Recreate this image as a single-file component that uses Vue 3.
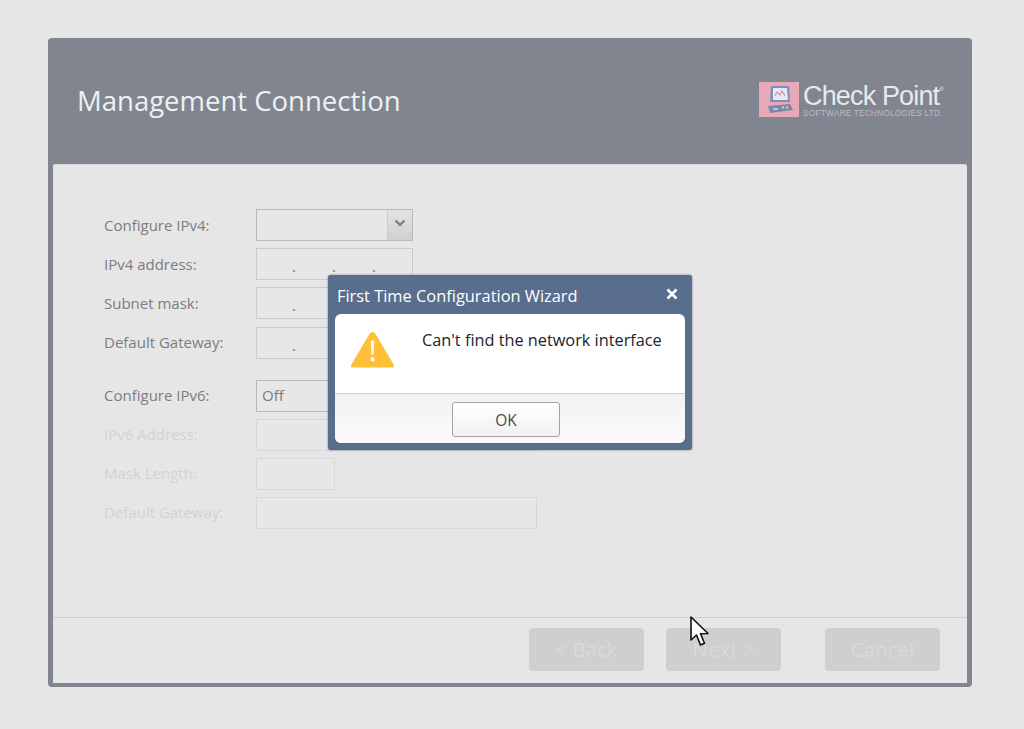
<script setup>
const ipv4Rows = [
  { label: 'IPv4 address:', dots: 3 },
  { label: 'Subnet mask:', dots: 1 },
  { label: 'Default Gateway:', dots: 1 },
]
const ipv6Rows = [
  { label: 'IPv6 Address:', cls: 'wide' },
  { label: 'Mask Length:', cls: 'short' },
  { label: 'Default Gateway:', cls: 'wide' },
]
</script>

<template>
  <div class="page">
    <div class="window">
      <header class="head">
        <h1>Management Connection</h1>
        <div class="logo">
          <svg class="mark" width="40" height="35" viewBox="0 0 40 35">
            <rect width="40" height="35" fill="#e7a9b8" />
            <path d="M12 4 H30 L31 20 H11 Z" fill="#7d8dbd" />
            <path d="M14 6 H28 L29 18 H14 Z" fill="#e6e9f3" />
            <path d="M16 14 L18 10 L21 13 L23 9 L26 14" fill="none" stroke="#d58aa8" stroke-width="1.1" />
            <path d="M9 24 L31 22 L34 28 L11 31 Z" fill="#7a86b0" />
            <path d="M23 26 l2 -1 M27 26 l2 -1" stroke="#e2cf60" stroke-width="2" />
            <path d="M14 27 h5" stroke="#cfd4e6" stroke-width="1.5" />
          </svg>
          <div class="brand">
            <div class="brand-name">Check Point<sup>®</sup></div>
            <div class="brand-sub">SOFTWARE TECHNOLOGIES LTD.</div>
          </div>
        </div>
      </header>

      <div class="panel">
        <div class="form">
          <div class="row">
            <label>Configure IPv4:</label>
            <div class="field select">
              <span class="select-value"></span>
              <span class="arrow">
                <svg width="12" height="8" viewBox="0 0 12 8">
                  <path d="M1.5 1.5 L6 6 L10.5 1.5" fill="none" stroke="#6b7d9b" stroke-width="2.2" />
                </svg>
              </span>
            </div>
          </div>
          <div v-for="r in ipv4Rows" :key="r.label" class="row">
            <label>{{ r.label }}</label>
            <div class="field ip">
              <span v-for="n in r.dots" :key="n" class="dot">.</span>
            </div>
          </div>

          <div class="row gap-top">
            <label>Configure IPv6:</label>
            <div class="field select"><span class="select-value">Off</span></div>
          </div>
          <div v-for="r in ipv6Rows" :key="r.label + r.cls" class="row off">
            <label>{{ r.label }}</label>
            <div class="field" :class="r.cls"></div>
          </div>
        </div>

        <footer class="foot">
          <button class="wbtn" disabled>&lt; Back</button>
          <button class="wbtn" disabled>Next &gt;</button>
          <button class="wbtn cancel" disabled>Cancel</button>
        </footer>
      </div>
    </div>

    <div class="dialog">
      <div class="dlg-title">
        <span>First Time Configuration Wizard</span>
        <svg width="12" height="12" viewBox="0 0 12 12">
          <path d="M1.5 1.5 L10.5 10.5 M10.5 1.5 L1.5 10.5" stroke="#fff" stroke-width="2.6" />
        </svg>
      </div>
      <div class="dlg-box">
        <div class="dlg-msg">
          <svg width="45" height="39" viewBox="0 0 46 40">
            <path d="M23 2 C21.5 2 20.5 3 19.5 4.5 L1.5 35 C0.3 37 0.8 38.5 3 38.5 H43 C45.2 38.5 45.7 37 44.5 35 L26.5 4.5 C25.5 3 24.5 2 23 2 Z" fill="#fdc038" />
            <path d="M21.2 11 H24.8 L24 25 H22 Z" fill="#fff" />
            <rect x="21.2" y="28" width="3.6" height="4" fill="#fff" />
          </svg>
          <p>Can't find the network interface</p>
        </div>
        <div class="dlg-foot">
          <button class="ok">OK</button>
        </div>
      </div>
    </div>

    <svg class="cursor" width="20" height="32" viewBox="0 0 20 32">
      <path d="M1 1 V24 L6.5 19 L10.5 29 L14.5 27.3 L10.5 17.8 L18 17.5 Z" fill="#fff" stroke="#111" stroke-width="1.6" stroke-linejoin="round" />
    </svg>
  </div>
</template>

<style>
html, body { margin: 0; background: #e6e6e6; }
</style>

<style scoped>
.page {
  position: relative;
  width: 1024px;
  height: 729px;
  overflow: hidden;
  box-sizing: border-box;
  padding: 38px 52px 42px 48px;
  background: #e6e6e6;
  font-family: "Open Sans", "Noto Sans", sans-serif;
}
.window {
  height: 649px;
  box-sizing: border-box;
  display: flex;
  flex-direction: column;
  background: #81858f;
  border-radius: 4px;
  padding: 0 5px 4px;
}
.head {
  height: 126px;
  flex: none;
  display: flex;
  align-items: center;
  justify-content: space-between;
  padding: 0 24px 0 24px;
}
.head h1 {
  margin: 0 0 2px;
  font-size: 27.5px;
  font-weight: 400;
  color: #eef1f4;
}
.logo { display: flex; align-items: flex-start; gap: 4px; margin-top: -1px; }
.mark { display: block; margin-top: -1px; }
.brand { width: 140px; color: #e8e9ec; font-family: "Liberation Sans", sans-serif; }
.brand-name {
  font-size: 27px;
  line-height: 26px;
  letter-spacing: -0.85px;
  white-space: nowrap;
}
.brand-name sup { font-size: 6px; vertical-align: 14px; line-height: 0; letter-spacing: 0; }
.brand-sub {
  font-size: 8.3px;
  line-height: 9px;
  color: #b9bcc3;
  white-space: nowrap;
  letter-spacing: 0.2px;
}
.panel {
  flex: 1;
  min-height: 0;
  display: flex;
  flex-direction: column;
  background: #e6e6e6;
  border-top: 1px solid #d4d5d7;
  border-radius: 2px 2px 0 0;
}
.form {
  flex: 1;
  padding: 44px 0 0 51px;
  display: flex;
  flex-direction: column;
  gap: 7.2px;
}
.row {
  display: flex;
  align-items: center;
  height: 32px;
  font-size: 15px;
  color: #7d7d7f;
}
.row label { width: 152px; flex: none; margin-bottom: 1px; }
.row.off label { margin-bottom: 2px; }
.gap-top { margin-top: 14px; }
.off { color: #d2d3d4; }
.field {
  box-sizing: border-box;
  height: 32px;
  width: 157px;
  border: 1px solid #c9cacb;
  background: #e7e7e7;
}
.select { display: flex; border-color: #b9babb; }
.select-value { flex: 1; padding-left: 5px; line-height: 28px; color: #7d7d7f; }
.arrow {
  width: 25px;
  border-left: 1px solid #c9cacb;
  background: linear-gradient(#e4e4e4, #cfcfd0);
  display: flex;
  align-items: center;
  justify-content: center;
  padding-bottom: 4px;
  box-sizing: border-box;
}
.ip { display: flex; padding-left: 17px; }
.dot {
  width: 40px;
  text-align: center;
  line-height: 38px;
  font-weight: 700;
  font-size: 12px;
  color: #8a8a8c;
}
.off .field { border-color: #d7d8d8; }
.wide { width: 281px; }
.short { width: 79px; }
.foot {
  flex: none;
  height: 66px;
  box-sizing: border-box;
  border-top: 1px solid #cfd0d1;
  display: flex;
  align-items: flex-start;
  padding: 10px 0 0 476px;
  gap: 22px;
}
.wbtn {
  width: 115px;
  height: 43px;
  border: none;
  border-radius: 4px;
  background: #cdcfd0;
  color: #d9dada;
  font: 400 20.5px "Open Sans", "Noto Sans", sans-serif;
  padding: 0 0 2px;
}
.cancel { margin-left: 22px; }
.dialog {
  position: absolute;
  left: 328px;
  top: 275px;
  width: 364px;
  height: 175px;
  box-sizing: border-box;
  padding: 0 7px 7px;
  display: flex;
  flex-direction: column;
  background: #596d8c;
  border-radius: 3px;
  box-shadow: 0 0 2px rgba(40, 50, 70, 0.7);
}
.dlg-title {
  height: 39px;
  flex: none;
  display: flex;
  align-items: center;
  justify-content: space-between;
  padding: 0 7px 0 2px;
  color: #fff;
  font-size: 16.4px;
}
.dlg-title span { margin-top: 1px; }
.dlg-title svg { margin-top: -2px; }
.dlg-box {
  flex: 1;
  display: flex;
  flex-direction: column;
  background: #fff;
  border-radius: 6px;
  overflow: hidden;
}
.dlg-msg {
  height: 79px;
  flex: none;
  display: flex;
  align-items: flex-start;
  box-sizing: border-box;
  padding: 17px 0 0 15px;
}
.dlg-msg svg { flex: none; margin-top: -1px; }
.dlg-msg p {
  margin: -1px 0 0 27px;
  font-size: 16.3px;
  line-height: 20px;
  color: #20232b;
  white-space: nowrap;
}
.dlg-foot {
  flex: 1;
  display: flex;
  justify-content: flex-start;
  align-items: flex-start;
  padding: 8px 0 0 117px;
  border-top: 1px solid #d2d2d2;
  background: linear-gradient(#f2f2f2, #fbfbfb);
}
.ok {
  width: 108px;
  height: 35px;
  box-sizing: border-box;
  border: 1px solid #a2a2a4;
  border-radius: 3px;
  background: linear-gradient(#ffffff, #f1f1f1);
  color: #4a4b50;
  font: 400 15.5px "Open Sans", "Noto Sans", sans-serif;
  padding: 0;
}
.cursor { position: absolute; left: 690px; top: 616px; }
</style>
